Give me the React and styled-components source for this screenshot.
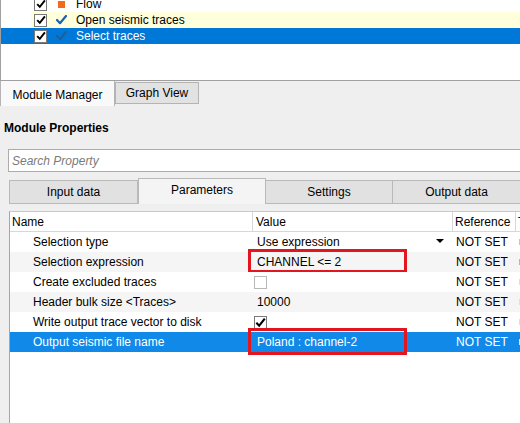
import React from "react";
import styled, { createGlobalStyle } from "styled-components";

const Global = createGlobalStyle`
  html, body {
    margin: 0;
    padding: 0;
    background: #efefef;
    overflow: hidden;
  }
  body {
    font-family: "Liberation Sans", Arial, sans-serif;
    font-size: 12px;
    color: #000;
  }
  #root { width: 520px; height: 423px; overflow: hidden; }
`;

const Page = styled.div`
  width: 520px;
  height: 423px;
  display: flex;
  flex-direction: column;
  overflow: hidden;
`;

/* ---------- flow tree ---------- */
const TreePanel = styled.div`
  height: 80px;
  flex: none;
  background: #fff;
  border-left: 1px solid #a0a0a0;
  border-bottom: 1px solid #a0a0a0;
  overflow: hidden;
`;

const TreeList = styled.div`
  margin-top: -4px;
  display: flex;
  flex-direction: column;
`;

const TreeRow = styled.div`
  height: 16px;
  display: flex;
  align-items: center;
  position: relative;
  color: ${(p) => (p.$selected ? "#fff" : "#000")};
  background: ${(p) => (p.$selected ? "#0078d7" : "transparent")};
  padding-left: 33px;
  &::before {
    content: "";
    display: ${(p) => (p.$current ? "block" : "none")};
    position: absolute;
    left: 30px;
    right: 0;
    top: 0;
    bottom: 0;
    background: #ffffdc;
    z-index: 0;
  }
  & > * { position: relative; z-index: 1; }
`;

const CheckBox = styled.span`
  width: 13px;
  height: 13px;
  box-sizing: border-box;
  border: 1px solid ${(p) => (p.$empty ? "#b8b8b8" : "#7a7a7a")};
  background: #fff;
  display: inline-flex;
  align-items: center;
  justify-content: center;
  flex: none;
`;

const StatusSlot = styled.span`
  width: 29px;
  display: inline-flex;
  justify-content: center;
  align-items: center;
  flex: none;
`;

const FlowSquare = styled.span`
  width: 7px;
  height: 7px;
  background: #f26a1b;
  display: block;
`;

const TreeLabel = styled.span`
  font-size: 12px;
  white-space: nowrap;
`;

const Tick = ({ color = "#000", size = 10 }) => (
  <svg width={size} height={size} viewBox="0 0 10 10">
    <path d="M1.2 5.2 L3.8 7.9 L8.9 1.4" fill="none" stroke={color} strokeWidth="1.9" />
  </svg>
);

const StepTick = ({ color }) => (
  <svg width="11" height="10" viewBox="0 0 11 10">
    <path d="M1 5 L4 8.2 L10 1" fill="none" stroke={color} strokeWidth="2.2" strokeLinecap="round" strokeLinejoin="round" />
  </svg>
);

/* ---------- main tabs ---------- */
const MainTabs = styled.div`
  display: flex;
  align-items: flex-start;
  height: 25px;
  flex: none;
`;

const MainTab = styled.div`
  box-sizing: border-box;
  height: ${(p) => (p.$active ? "25px" : "22px")};
  margin-top: ${(p) => (p.$active ? "0" : "1px")};
  width: ${(p) => p.$w}px;
  background: ${(p) => (p.$active ? "#f9f9f9" : "#e2e2e2")};
  border: 1px solid #b4b4b4;
  border-top: ${(p) => (p.$active ? "none" : "1px solid #b4b4b4")};
  border-bottom: ${(p) => (p.$active ? "none" : "1px solid #b4b4b4")};
  display: flex;
  align-items: center;
  justify-content: center;
  padding-top: ${(p) => (p.$active ? "2px" : "0")};
  font-size: 12px;
`;

const Heading = styled.div`
  font-weight: bold;
  font-size: 12px;
  padding: 15px 0 0 4px;
  height: 18px;
  line-height: 15px;
`;

const Search = styled.div`
  margin: 10px 0 0 8px;
  height: 23px;
  box-sizing: border-box;
  border: 1px solid #acacac;
  border-right: none;
  background: #fff;
  display: flex;
  align-items: center;
  padding-left: 3px;
  color: #7a7a7a;
  font-style: italic;
  font-size: 12px;
`;

/* ---------- property tabs ---------- */
const PropTabs = styled.div`
  display: flex;
  align-items: flex-end;
  margin-top: 6px;
  padding-left: 9px;
  height: 26px;
  flex: none;
`;

const PropTab = styled.div`
  box-sizing: border-box;
  width: ${(p) => p.$w}px;
  height: ${(p) => (p.$active ? "26px" : "24px")};
  background: ${(p) => (p.$active ? "#f4f4f4" : "#e1e1e1")};
  border: 1px solid #b9b9b9;
  border-left: ${(p) => (p.$first || p.$active ? "1px solid #b9b9b9" : "none")};
  border-bottom: ${(p) => (p.$active ? "none" : "1px solid #b9b9b9")};
  display: flex;
  align-items: center;
  justify-content: center;
  padding-bottom: ${(p) => (p.$active ? "3px" : "0")};
  font-size: 12px;
  flex: none;
`;

const TablePane = styled.div`
  flex: 1;
  padding: 7px 0 0 9px;
  min-height: 0;
`;

const Table = styled.div`
  height: 100%;
  background: #fff;
  border-left: 1px solid #a6a6a6;
  border-top: 1px solid #c8c8c8;
  display: grid;
  grid-template-columns: 243px 200px 63px 40px;
  grid-auto-rows: 20px;
  align-content: start;
  width: 560px;
`;

const HeadCell = styled.div`
  height: 19px;
  display: flex;
  align-items: center;
  padding-left: ${(p) => p.$pad ?? 3}px;
  border-bottom: 1px solid #d7d7d7;
  border-right: 1px solid #d7d7d7;
  background: #fff;
  white-space: nowrap;
  overflow: hidden;
`;

const Cell = styled.div`
  position: relative;
  display: flex;
  align-items: center;
  padding-left: ${(p) => p.$pad ?? 0}px;
  white-space: nowrap;
  background: ${(p) => (p.$selected ? "#1089e8" : p.$alt ? "#f5f5f5" : "#fff")};
  color: ${(p) => (p.$selected ? "#fff" : "#000")};
`;

const DropArrow = styled.span`
  position: absolute;
  right: 9px;
  top: 7px;
  width: 0;
  height: 0;
  border-left: 4px solid transparent;
  border-right: 4px solid transparent;
  border-top: 4px solid #000;
`;

const Callout = styled.span`
  position: absolute;
  left: -5px;
  top: ${(p) => p.$top}px;
  width: 159px;
  height: ${(p) => p.$h}px;
  box-sizing: border-box;
  border: 3px solid #e3151f;
  pointer-events: none;
`;

const TypeMark = styled.span`
  width: 4px;
  height: 6px;
  margin-left: 3px;
  background: ${(p) => p.$c};
  display: block;
`;

const rows = [
  { name: "Selection type", value: "Use expression", drop: true, mark: "#f0c060" },
  { name: "Selection expression", value: "CHANNEL <= 2", callout: { top: -3, h: 24 }, mark: "#f0b040" },
  { name: "Create excluded traces", check: "empty", mark: "#f5e38a" },
  { name: "Header bulk size <Traces>", value: "10000", mark: "#f5e38a" },
  { name: "Write output trace vector to disk", check: "on", mark: "#f5e38a" },
  { name: "Output seismic file name", value: "Poland : channel-2", selected: true, callout: { top: -4, h: 27 }, mark: "#f5e38a" },
];

export default function App() {
  return (
    <Page>
      <Global />
      <TreePanel>
        <TreeList>
          <TreeRow>
            <CheckBox><Tick /></CheckBox>
            <StatusSlot><FlowSquare /></StatusSlot>
            <TreeLabel>Flow</TreeLabel>
          </TreeRow>
          <TreeRow $current>
            <CheckBox><Tick /></CheckBox>
            <StatusSlot><StepTick color="#1b62b3" /></StatusSlot>
            <TreeLabel>Open seismic traces</TreeLabel>
          </TreeRow>
          <TreeRow $selected>
            <CheckBox><Tick /></CheckBox>
            <StatusSlot><StepTick color="#1d5fa3" /></StatusSlot>
            <TreeLabel>Select traces</TreeLabel>
          </TreeRow>
        </TreeList>
      </TreePanel>

      <MainTabs>
        <MainTab $active $w={115}>Module Manager</MainTab>
        <MainTab $w={84}>Graph View</MainTab>
      </MainTabs>

      <Heading>Module Properties</Heading>
      <Search>Search Property</Search>

      <PropTabs>
        <PropTab $first $w={129}>Input data</PropTab>
        <PropTab $active $w={128}>Parameters</PropTab>
        <PropTab $w={127}>Settings</PropTab>
        <PropTab $w={128}>Output data</PropTab>
      </PropTabs>

      <TablePane>
        <Table>
          <HeadCell $pad={2}>Name</HeadCell>
          <HeadCell>Value</HeadCell>
          <HeadCell $pad={2}>Reference</HeadCell>
          <HeadCell $pad={2}>Type</HeadCell>
          {rows.map((r, i) => {
            const alt = i % 2 === 1;
            return (
              <React.Fragment key={r.name}>
                <Cell $pad={23} $alt={alt} $selected={r.selected}>{r.name}</Cell>
                <Cell $pad={4} $alt={alt} $selected={r.selected}>
                  {r.value}
                  {r.check && (
                    <CheckBox $empty={r.check === "empty"} style={{ marginLeft: -3 }}>
                      {r.check === "on" && <Tick size={11} />}
                    </CheckBox>
                  )}
                  {r.drop && <DropArrow />}
                  {r.callout && <Callout $top={r.callout.top} $h={r.callout.h} />}
                </Cell>
                <Cell $pad={3} $alt={alt} $selected={r.selected}>NOT SET</Cell>
                <Cell $alt={alt} $selected={r.selected}>
                  <TypeMark $c={r.mark} />
                </Cell>
              </React.Fragment>
            );
          })}
        </Table>
      </TablePane>
    </Page>
  );
}
